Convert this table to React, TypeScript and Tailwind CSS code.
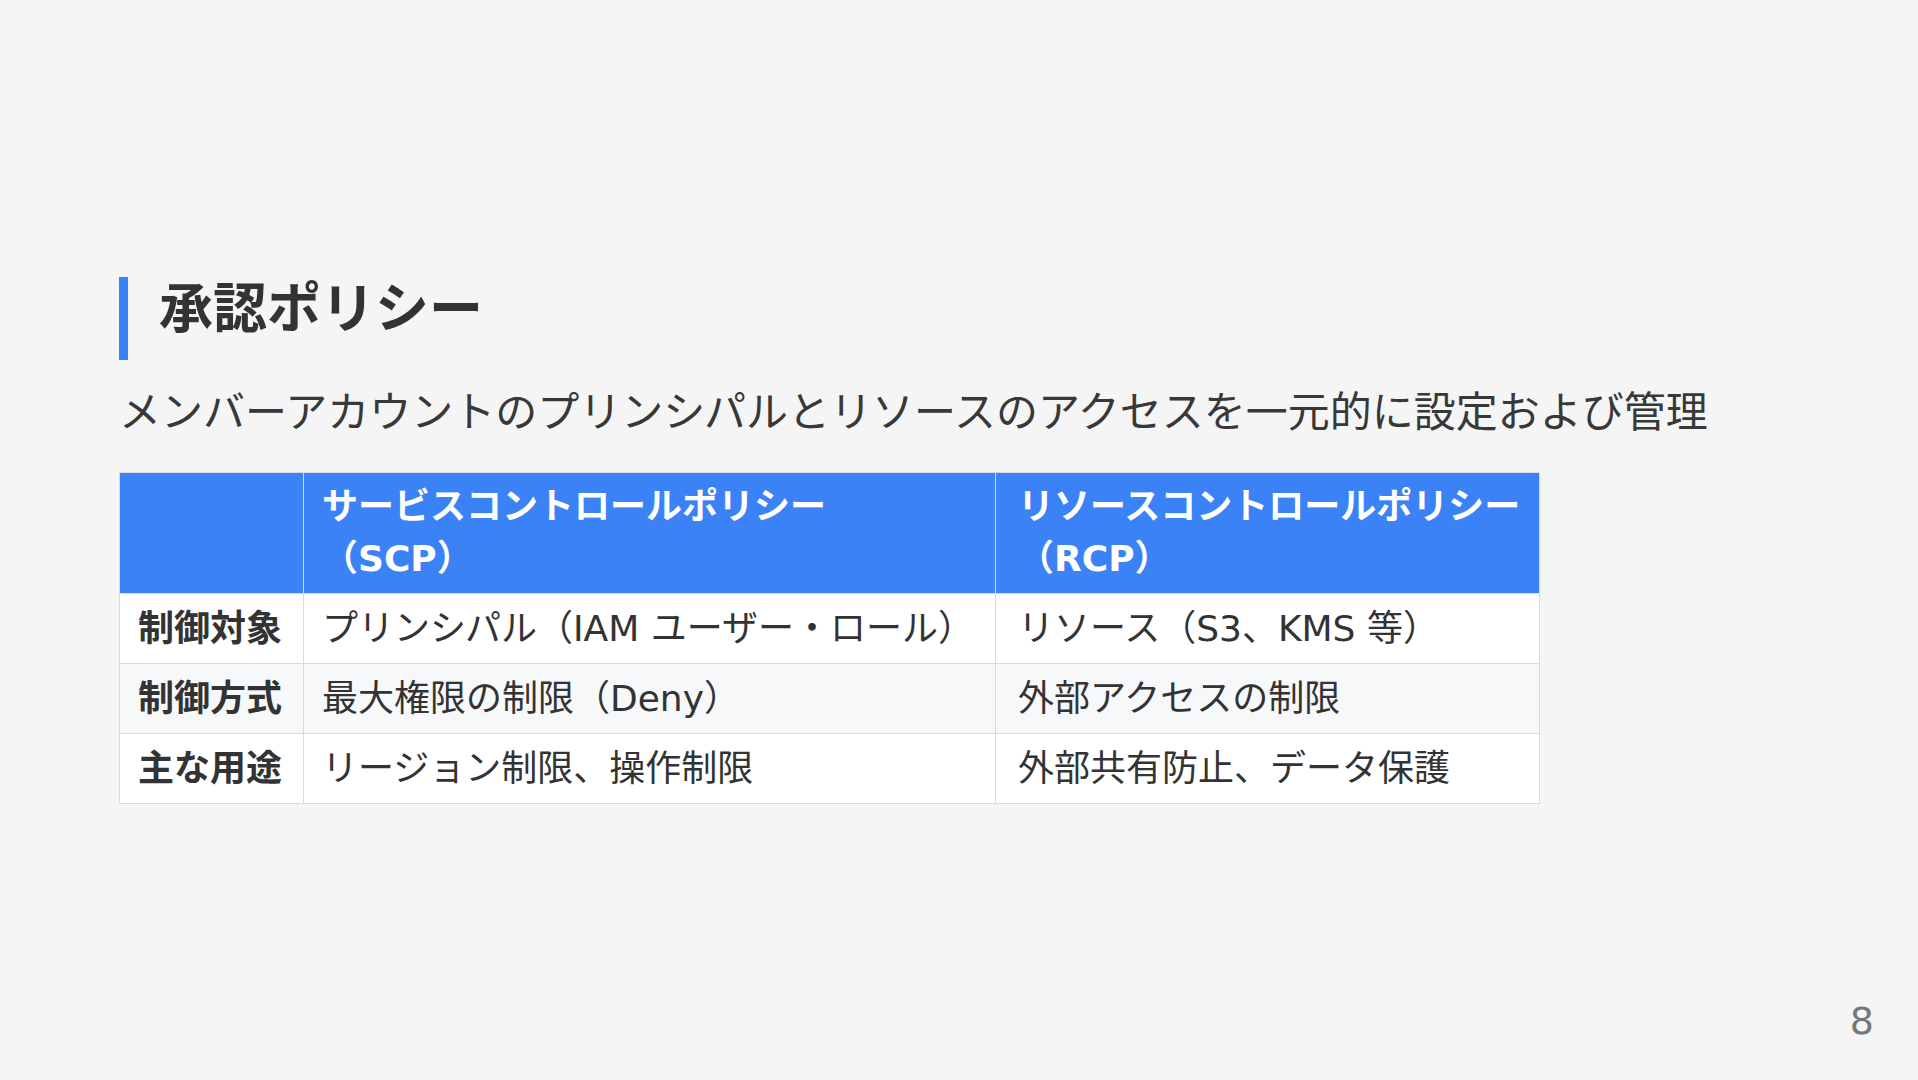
import React from "react";

const rows = [
  ["制御対象", "プリンシパル（IAM ユーザー・ロール）", "リソース（S3、KMS 等）"],
  ["制御方式", "最大権限の制限（Deny）", "外部アクセスの制限"],
  ["主な用途", "リージョン制限、操作制限", "外部共有防止、データ保護"],
];

export default function App() {
  return (
    <div
      className="relative flex h-[1080px] w-[1918px] flex-col justify-center bg-[#f5f5f5] px-[119px] text-[#333333]"
      style={{ fontFamily: '"DejaVu Sans", "Noto Sans CJK JP", sans-serif' }}
    >
      <h1 className="m-0 h-[83px] border-l-[9px] border-[#3b82f6] pl-[31px] text-[54px] font-bold leading-[66px]">
        承認ポリシー
      </h1>
      <p className="mt-[21px] text-[42px] leading-[63px] text-[#383838]">
        メンバーアカウントのプリンシパルとリソースのアクセスを一元的に設定および管理
      </p>
      <table className="mt-[28px] w-[1420px] table-fixed border-collapse text-[36px] leading-[52px]">
        <colgroup>
          <col className="w-[184px]" />
          <col className="w-[692px]" />
          <col className="w-[544px]" />
        </colgroup>
        <thead>
          <tr className="bg-[#3b82f6] text-white">
            <th className="border border-[#d5dbe3] px-[18px] py-[8px] text-left font-bold"></th>
            <th className="border border-[#d5dbe3] px-[18px] py-[8px] text-left font-bold">
              サービスコントロールポリシー
              <br />
              （SCP）
            </th>
            <th className="border border-[#d5dbe3] py-[8px] pl-[22px] pr-[14px] text-left font-bold">
              リソースコントロールポリシー
              <br />
              （RCP）
            </th>
          </tr>
        </thead>
        <tbody className="leading-[53px]">
          {rows.map((r, i) => (
            <tr key={i} className={i === 1 ? "bg-[#f6f8fa]" : "bg-white"}>
              <td className="border border-[#d5dbe3] px-[18px] py-[8px] font-bold">{r[0]}</td>
              <td className="border border-[#d5dbe3] px-[18px] py-[8px]">{r[1]}</td>
              <td className="border border-[#d5dbe3] py-[8px] pl-[22px] pr-[14px]">{r[2]}</td>
            </tr>
          ))}
        </tbody>
      </table>
      <div className="absolute bottom-[40px] right-[44px] text-[38px] leading-none text-[#777777]">8</div>
    </div>
  );
}
